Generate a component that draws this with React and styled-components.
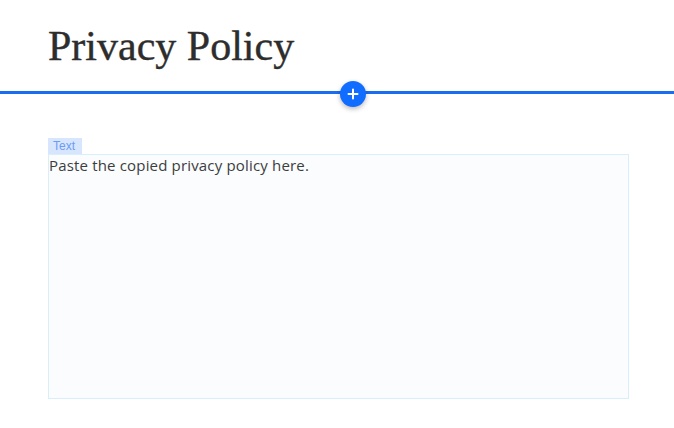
import React from 'react'
import styled, { createGlobalStyle } from 'styled-components'

const GlobalStyle = createGlobalStyle`
  html, body {
    margin: 0;
    padding: 0;
    background: #ffffff;
  }
`;

function App() {
    return (
        <Page>
            <GlobalStyle />
            <Header>
                <Title>Privacy Policy</Title>
            </Header>
            <Divider>
                <AddButton aria-label='add section'>
                    <svg width='12' height='12' viewBox='0 0 12 12'>
                        <path d='M6 1.5v9M1.5 6h9' stroke='#fff' strokeWidth='2' strokeLinecap='round' />
                    </svg>
                </AddButton>
            </Divider>
            <Section>
                <Tag>Text</Tag>
                <TextBox>Paste the copied privacy policy here.</TextBox>
            </Section>
        </Page>
    );
}

export default App;

const Page = styled.div`
    width: 674px;
    min-height: 428px;
    background: #fff;
`;
const Header = styled.header`
    padding: 22px 0 0 48px;
    margin-bottom: 21px;
`;
const Title = styled.h1`
    margin: 0;
    font-family: "Liberation Serif", "Times New Roman", serif;
    font-weight: normal;
    font-size: 42px;
    line-height: 48px;
    color: #2e2d2d;
    -webkit-text-stroke: 0.4px #2e2d2d;
`;
const Divider = styled.div`
    position: relative;
    height: 3px;
    background: #1a6cf0;
`;
const AddButton = styled.button`
    position: absolute;
    left: 340px;
    top: -10px;
    width: 26px;
    height: 26px;
    border-radius: 50%;
    border: none;
    padding: 0;
    background: #116dff;
    box-shadow: 0 2px 5px rgba(0, 0, 0, 0.28);
    display: flex;
    align-items: center;
    justify-content: center;
    cursor: pointer;
`;
const Section = styled.section`
    padding: 44px 0 0 48px;
    display: flex;
    flex-direction: column;
    align-items: flex-start;
`;
const Tag = styled.span`
    box-sizing: border-box;
    width: 34px;
    height: 16px;
    padding-left: 5px;
    background: #d7e6fd;
    color: #6c9cf5;
    font-family: "Liberation Sans", Arial, sans-serif;
    font-size: 12px;
    line-height: 16px;
`;
const TextBox = styled.div`
    box-sizing: border-box;
    width: 581px;
    height: 245px;
    padding-top: 1px;
    border: 1px solid #d8eefa;
    background: #fafcfe;
    font-family: "Open Sans", "Liberation Sans", sans-serif;
    font-size: 15px;
    line-height: 18px;
    letter-spacing: 0.17px;
    color: #3d3d3d;
`;
